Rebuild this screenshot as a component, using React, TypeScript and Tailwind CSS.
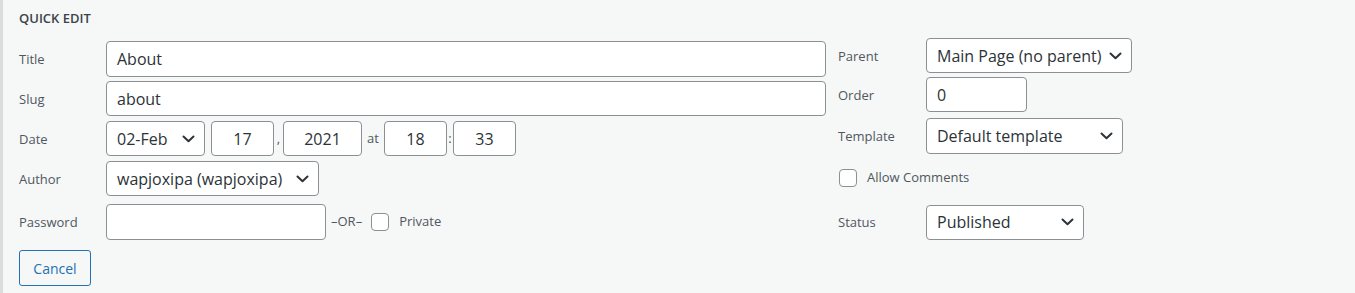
import React from "react";

const font = { fontFamily: '"Open Sans", "Noto Sans", sans-serif' };

function Chevron() {
  return (
    <svg width="13" height="8" viewBox="0 0 13 8" fill="none" className="shrink-0">
      <path d="M1.5 1.5 L6.5 6.2 L11.5 1.5" stroke="#2c3338" strokeWidth="2" strokeLinecap="round" strokeLinejoin="round" />
    </svg>
  );
}

function Select({ value, className }: { value: string; className: string }) {
  return (
    <div
      className={`flex items-center justify-between gap-[6px] border border-[#8c8f94] rounded-[4px] bg-white pl-[10px] pr-[9px] text-[16px] text-[#2c3338] ${className}`}
    >
      <span className="whitespace-nowrap">{value}</span>
      <Chevron />
    </div>
  );
}

function Input({ value = "", className, center }: { value?: string; className: string; center?: boolean }) {
  return (
    <div
      className={`flex items-center border border-[#8c8f94] rounded-[4px] bg-white px-[10px] text-[16px] text-[#2c3338] ${center ? "justify-center" : ""} ${className}`}
    >
      {value}
    </div>
  );
}

function Checkbox() {
  return <div className="w-[18px] h-[18px] border border-[#8c8f94] rounded-[4px] bg-white shrink-0" />;
}

function Label({ children, w = "w-[87px]" }: { children: React.ReactNode; w?: string }) {
  return <div className={`${w} shrink-0 pt-[2px] text-[13px] text-[#50575e]`}>{children}</div>;
}

export default function App() {
  return (
    <div className="w-[1355px] h-[293px] bg-[#f6f7f7] border-l-[3px] border-[#dcdcde] relative overflow-hidden" style={font}>
      <div className="flex pl-[16px]">
        {/* left column */}
        <div className="w-[819px] shrink-0">
          <div className="pt-[9px] h-[41px] text-[13px] font-semibold text-[#3c434a] uppercase">Quick Edit</div>
          <div className="flex items-center">
            <Label>Title</Label>
            <Input value="About" className="w-[720px] h-[36px]" />
          </div>
          <div className="flex items-center mt-[4px]">
            <Label>Slug</Label>
            <Input value="about" className="w-[720px] h-[35px]" />
          </div>
          <div className="flex items-center mt-[5px]">
            <Label>Date</Label>
            <Select value="02-Feb" className="w-[99px] h-[35px]" />
            <Input value="17" center className="w-[63px] h-[35px] ml-[6px]" />
            <span className="w-[9px] text-center text-[13px] text-[#50575e]">,</span>
            <Input value="2021" center className="w-[79px] h-[35px]" />
            <span className="w-[22px] text-center text-[13px] text-[#50575e]">at</span>
            <Input value="18" center className="w-[63px] h-[35px]" />
            <span className="w-[6px] text-center text-[13px] text-[#50575e]">:</span>
            <Input value="33" center className="w-[63px] h-[35px]" />
          </div>
          <div className="flex items-center mt-[5px]">
            <Label>Author</Label>
            <Select value="wapjoxipa (wapjoxipa)" className="w-[213px] h-[35px]" />
          </div>
          <div className="flex items-center mt-[8px]">
            <Label>Password</Label>
            <Input className="w-[220px] h-[36px]" />
            <span className="ml-[5px] text-[13px] text-[#50575e]">–OR–</span>
            <div className="ml-[9px]">
              <Checkbox />
            </div>
            <span className="ml-[10px] text-[13px] text-[#50575e]">Private</span>
          </div>
          <div className="mt-[10px]">
            <div className="w-[72px] h-[36px] flex items-center justify-center border border-[#2271b1] rounded-[3px] text-[#2271b1] text-[14px]">
              Cancel
            </div>
          </div>
        </div>

        {/* right column */}
        <div className="pt-[38px]">
          <div className="flex items-center">
            <Label w="w-[88px]">Parent</Label>
            <Select value="Main Page (no parent)" className="w-[206px] h-[35px]" />
          </div>
          <div className="flex items-center mt-[4px]">
            <Label w="w-[88px]">Order</Label>
            <Input value="0" className="w-[101px] h-[35px]" />
          </div>
          <div className="flex items-center mt-[6px]">
            <Label w="w-[88px]">Template</Label>
            <Select value="Default template" className="w-[197px] h-[36px]" />
          </div>
          <div className="flex items-center mt-[14px] pl-[1px]">
            <Checkbox />
            <span className="ml-[10px] text-[13px] text-[#50575e]">Allow Comments</span>
          </div>
          <div className="flex items-center mt-[17px]">
            <Label w="w-[88px]">Status</Label>
            <Select value="Published" className="w-[158px] h-[35px]" />
          </div>
        </div>
      </div>
    </div>
  );
}
